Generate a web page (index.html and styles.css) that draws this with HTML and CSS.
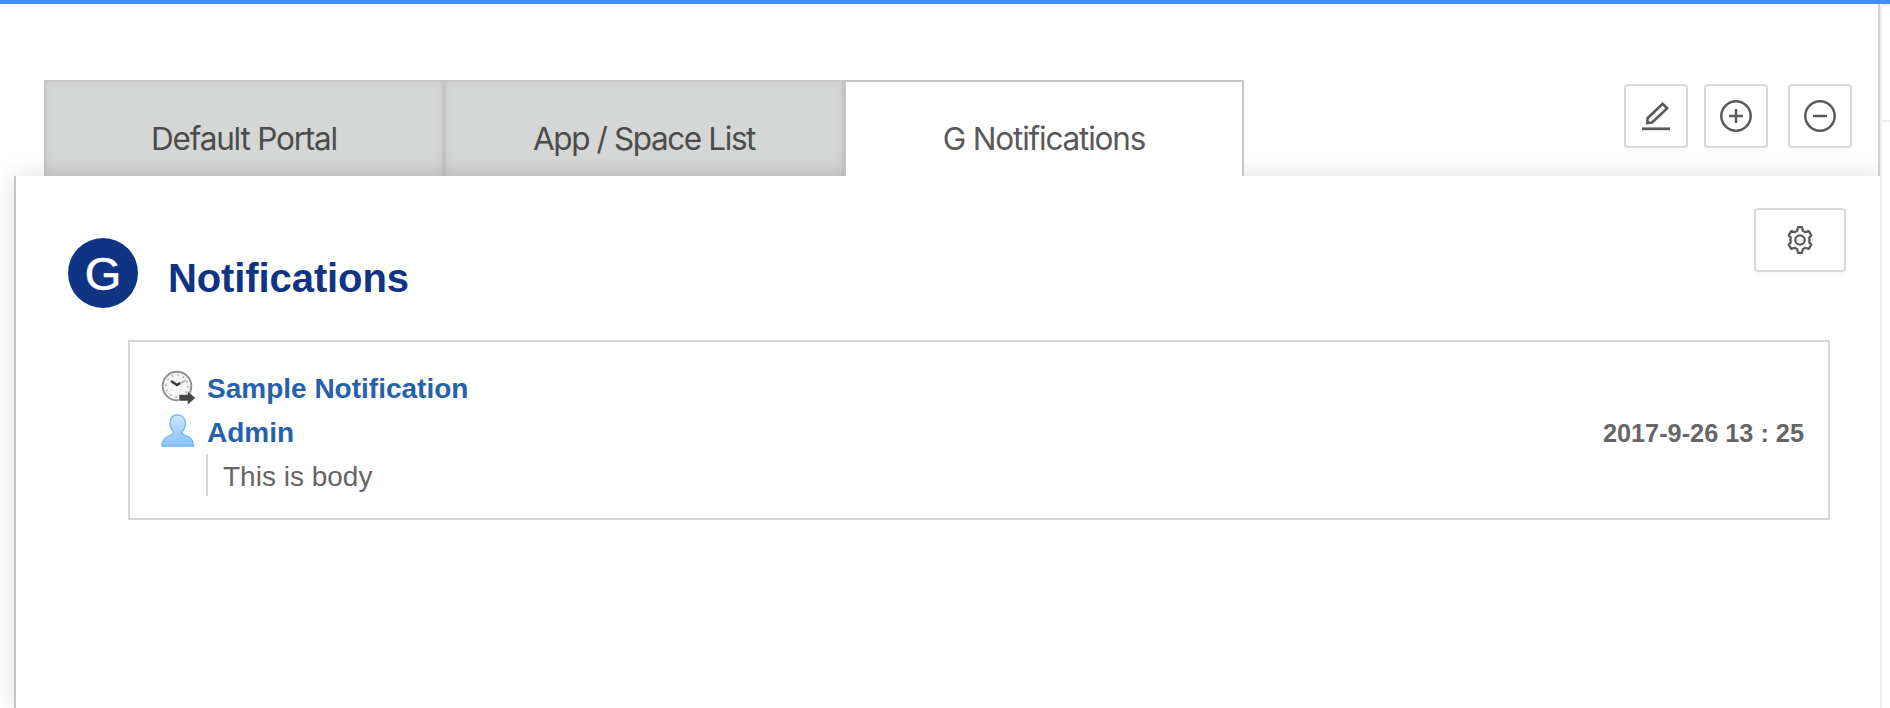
FILE: index.html
```html
<!DOCTYPE html>
<html lang="en">
<head>
<meta charset="utf-8">
<title>Portal</title>
<link rel="stylesheet" href="styles.css">
</head>
<body>
<div class="page">
  <main class="main">
    <header class="header">
      <nav class="tabs">
        <a class="tab"><span class="tab-a">Default Portal</span></a>
        <a class="tab"><span class="tab-b">App / Space List</span></a>
        <a class="tab active"><span class="tab-c">G Notifications</span></a>
      </nav>
      <div class="actions">
        <button class="btn" aria-label="Edit"><svg width="32" height="32" viewBox="0 0 32 32" fill="none" stroke="#595959" stroke-width="2.6"><path d="M7.300 23 7.600 18.200 22.600 3.700 27.200 8.200 12.100 22.500 7.300 23Z"/><path d="M2 28.800H30" stroke-width="2.800"/></svg></button>
        <button class="btn" aria-label="Add"><svg width="32" height="32" viewBox="0 0 32 32" fill="none" stroke="#595959" stroke-width="2.5"><circle cx="16" cy="16" r="14.7"/><path d="M9 16H23M16 9V23"/></svg></button>
        <button class="btn last" aria-label="Remove"><svg width="32" height="32" viewBox="0 0 32 32" fill="none" stroke="#595959" stroke-width="2.5"><circle cx="16" cy="16" r="14.7"/><path d="M9 16H23"/></svg></button>
      </div>
    </header>
    <section class="panel">
      <div class="title-row">
        <div class="logo">G</div>
        <h1 class="title">Notifications</h1>
        <button class="btn settings" aria-label="Settings"><svg width="28" height="28" viewBox="0 0 28 28" fill="none" stroke="#595959" stroke-width="2.2"><path stroke-linejoin="round" d="M12 1.200h4l.8 3.500 2.600 1.500 3.400-1.100 2.500 4.300-2.100 2.100q.5 2.500 0 5l2.100 2.100-2.500 4.300-3.400-1.100-2.600 1.500-.8 3.500h-4l-.8-3.500-2.600-1.500-3.400 1.100-2.500-4.300 2.100-2.100q-.5-2.500 0-5L2.700 9.400l2.500-4.300 3.400 1.100 2.600-1.500Z"/><circle cx="14" cy="14" r="4.700"/></svg></button>
      </div>
      <article class="notice">
        <div class="row">
          <svg class="icon" width="36" height="36" viewBox="0 0 36 36"><circle cx="17" cy="16" r="14.300" fill="#f5f5f5" stroke="#8d938f" stroke-width="2"/><circle cx="17" cy="16" r="11" fill="none" stroke="#b5b5b5" stroke-width="2" stroke-dasharray="1.600 4.160"/><path d="M17 15 25.500 10.500" stroke="#aaa" stroke-width="1.500"/><path d="M11 11 17 15 20 13" fill="none" stroke="#303b35" stroke-width="2.400"/><path d="M19 24.500V31H27.500V35L35.500 28 27.500 21V24.500Z" fill="#474747" stroke="#fff" stroke-width=".5"/></svg>
          <a class="link">Sample Notification</a>
        </div>
        <div class="row">
          <svg class="icon" width="36" height="36" viewBox="0 0 36 36"><defs><linearGradient id="user" x1="0" y1="0" x2="0" y2="1"><stop offset="0" stop-color="#cfe6ff"/><stop offset=".55" stop-color="#a3d0ff"/><stop offset="1" stop-color="#8ac4ff"/></linearGradient></defs><path d="M17.600.800C12.500.800 10 4.500 10 9.500c0 3.500 1.400 6.200 3.300 8.300.6 1.600-.4 2.400-2.300 3.200-5 1.800-9 4-9 11.200H33.500c0-7.200-4-9.400-9-11.200-1.900-.8-2.900-1.600-2.300-3.200 1.900-2.100 3.300-4.800 3.300-8.300C25.500 4.500 22.700.800 17.600.800Z" fill="url(#user)" stroke="#73b3f3" stroke-width="1.200"/></svg>
          <a class="link">Admin</a>
          <time class="date">2017-9-26 13 : 25</time>
        </div>
        <p class="body">This is body</p>
      </article>
    </section>
  </main>
  <aside class="side"><div class="side-head"></div></aside>
</div>
</body>
</html>
```
FILE: styles.css
```css
* { box-sizing: border-box; }
body {
  margin: 0;
  overflow: hidden;
  background: #fff;
  font-family: "Liberation Sans", Arial, sans-serif;
}
.page {
  display: flex;
  height: 708px;
  border-top: 4px solid #3d90e6;
}
.main {
  display: flex;
  flex-direction: column;
  width: 1880px;
  overflow: hidden;
}
.header {
  display: flex;
  justify-content: space-between;
  align-items: flex-start;
  height: 172px;
  padding: 76px 26px 0 44px;
  border-right: 2px solid #d3d3d3;
}
.tabs { display: flex; }
.tab {
  display: flex;
  justify-content: center;
  width: 400px;
  height: 96px;
  padding-top: 38px;
  border: 2px solid #c4c6c5;
  border-bottom: 0;
  background: #d5d7d6;
  box-shadow: inset 0 0 12px rgba(0, 0, 0, .06);
  color: #4b4c4b;
  font: 31.500px/38px Inter, sans-serif;
  white-space: nowrap;
}
.tab.active {
  position: relative;
  z-index: 2;
  background: #fff;
  box-shadow: none;
  color: #595959;
}
.tab-a { letter-spacing: -1.200px; }
.tab-b { letter-spacing: -1.400px; }
.tab-c { letter-spacing: -1.200px; }
.actions {
  display: flex;
  gap: 16px;
  padding-top: 4px;
}
.btn {
  display: flex;
  align-items: center;
  justify-content: center;
  width: 64px;
  height: 64px;
  padding: 0;
  border: 2px solid #d9d9d9;
  border-radius: 4px;
  background: #fff;
  box-shadow: 0 4px 0 rgba(0, 0, 0, .015);
}
.btn.last { margin-left: 4px; }
.panel {
  position: relative;
  flex: 1;
  margin-left: 14px;
  padding: 32px 34px 0 52px;
  border-left: 2px solid #c4c6c5;
  background: #fff;
  box-shadow: 0 0 24px rgba(0, 0, 0, .13);
}
.title-row {
  display: flex;
  height: 132px;
}
.logo {
  width: 70px;
  height: 70px;
  margin-top: 30px;
  border-radius: 50%;
  background: #103484;
  color: #fff;
  font-size: 47px;
  line-height: 71px;
  text-align: center;
  -webkit-text-stroke: .6px #fff;
}
.title {
  margin: 47px 0 0 30px;
  color: #103484;
  font-size: 40px;
  line-height: 46px;
  letter-spacing: -.1px;
}
.settings {
  width: 92px;
  margin-left: auto;
}
.notice {
  width: 1702px;
  height: 180px;
  margin-left: 60px;
  padding: 24px 24px 0 30px;
  border: 2px solid #d6d6d6;
}
.row {
  display: flex;
  align-items: center;
  height: 44px;
}
.icon { margin-right: 11px; }
.link {
  padding-top: 2px;
  color: #2761ac;
  font-size: 28px;
  font-weight: bold;
  line-height: 44px;
}
.date {
  margin-left: auto;
  padding-top: 2px;
  color: #666;
  font-size: 25.300px;
  font-weight: bold;
}
.body {
  width: max-content;
  height: 42px;
  margin: 0 0 0 46px;
  padding-left: 15px;
  border-left: 2px solid #d9d9d9;
  color: #666;
  font-size: 28px;
  line-height: 45px;
}
.side {
  width: 10px;
  border: solid #efefef;
  border-width: 2px 0 0 2px;
  border-radius: 4px 0 0 0;
}
.side-head {
  height: 116px;
  border-bottom: 2px solid #efefef;
}
```
